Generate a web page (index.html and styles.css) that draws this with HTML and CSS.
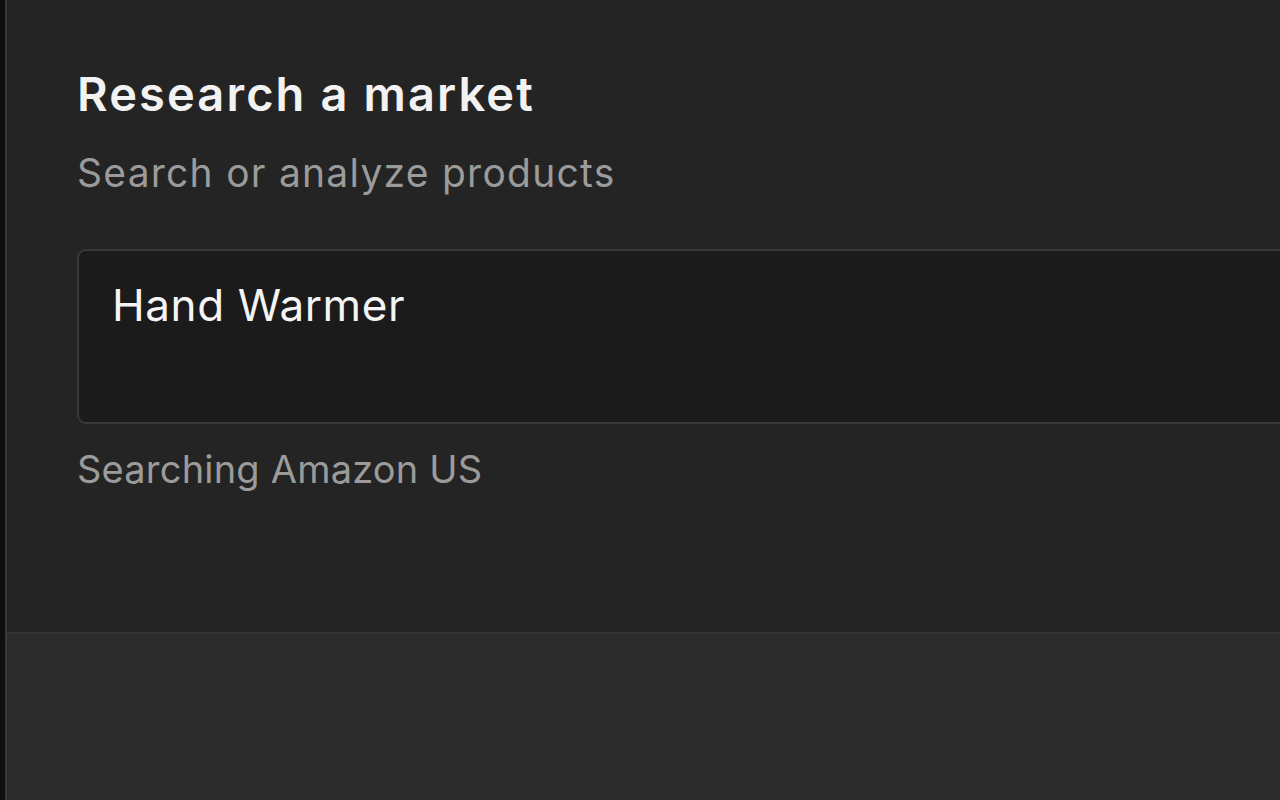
FILE: index.html
```html
<!DOCTYPE html>
<html lang="en">
<head>
<meta charset="utf-8">
<title>Research a market</title>
<link rel="stylesheet" href="styles.css">
</head>
<body>
<div class="page">
  <div class="backdrop"></div>
  <section class="modal">
    <div class="modal-body">
      <h1 class="title">Research a market</h1>
      <p class="subtitle">Search or analyze products</p>
      <div class="search-box">
        <span class="search-value">Hand Warmer</span>
      </div>
      <p class="hint">Searching Amazon US</p>
    </div>
    <div class="modal-footer"></div>
  </section>
</div>
</body>
</html>
```

FILE: styles.css
```css
html, body {
  margin: 0;
  padding: 0;
  height: 100%;
  background: #0e0e0e;
  font-family: Inter, "Noto Sans", sans-serif;
  overflow: hidden;
}

.page {
  display: flex;
  height: 800px;
  width: 1280px;
  overflow: hidden;
}

.backdrop {
  flex: none;
  width: 5px;
  background: #0e0e0e;
}

.modal {
  flex: none;
  width: 1500px;
  display: flex;
  flex-direction: column;
  border-left: 2px solid #383838;
  background: #242424;
}

.modal-body {
  height: 632px;
  box-sizing: border-box;
  padding: 66px 0 0 70px;
  background: #242424;
}

.title {
  margin: 0;
  font-size: 47px;
  line-height: 56px;
  font-weight: 600;
  color: #f2f2f2;
  letter-spacing: 2.1px;
}

.subtitle {
  margin: 27px 0 0;
  font-size: 39px;
  line-height: 48px;
  font-weight: 400;
  color: #9b9b9b;
  letter-spacing: 1.25px;
}

.search-box {
  margin-top: 52px;
  width: 1400px;
  height: 175px;
  box-sizing: border-box;
  border: 2px solid #393939;
  border-radius: 9px;
  background: #1b1b1b;
  padding: 27px 0 0 33px;
}

.search-value {
  font-size: 44px;
  line-height: 54px;
  color: #f4f4f4;
  letter-spacing: 0.6px;
}

.hint {
  margin: 21px 0 0;
  font-size: 38px;
  line-height: 48px;
  color: #9b9b9b;
  letter-spacing: 0.2px;
}

.modal-footer {
  flex: 1;
  border-top: 2px solid #353535;
  background: #2b2b2b;
}
```
